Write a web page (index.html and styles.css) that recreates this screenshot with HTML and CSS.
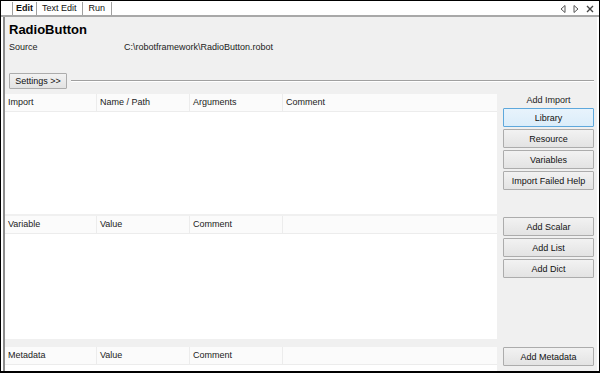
FILE: index.html
```html
<!DOCTYPE html>
<html lang="en">
<head>
    <meta charset="UTF-8">
    <title>RadioButton</title>
    <link rel="stylesheet" href="styles.css">
</head>
<body>
    <div class="frame">
        <div class="tabbar">
            <div class="tabs">
                <span class="tab active">Edit</span>
                <span class="tab">Text Edit</span>
                <span class="tab">Run</span>
            </div>
            <div class="tab-tools">
                <svg width="6" height="8" viewBox="0 0 6 8"><path d="M5 0.5 L1 4 L5 7.5 Z" fill="none" stroke="#555" stroke-width="1"/></svg>
                <svg width="6" height="8" viewBox="0 0 6 8"><path d="M1 0.5 L5 4 L1 7.5 Z" fill="none" stroke="#555" stroke-width="1"/></svg>
                <svg width="8" height="8" viewBox="0 0 8 8"><path d="M1 1 L7 7 M7 1 L1 7" stroke="#444" stroke-width="1.4"/></svg>
            </div>
        </div>

        <div class="panel">
            <h1 class="title">RadioButton</h1>
            <div class="source">
                <span class="source-label">Source</span>
                <span>C:\robotframework\RadioButton.robot</span>
            </div>

            <div class="settings-row">
                <button class="btn settings">Settings &gt;&gt;</button>
                <div class="rule"></div>
            </div>

            <div class="section imports">
                <div class="grid">
                    <div class="grid-head">
                        <span>Import</span>
                        <span>Name / Path</span>
                        <span>Arguments</span>
                        <span>Comment</span>
                    </div>
                </div>
                <div class="actions">
                    <div class="actions-label">Add Import</div>
                    <button class="btn focused">Library</button>
                    <button class="btn">Resource</button>
                    <button class="btn">Variables</button>
                    <button class="btn">Import Failed Help</button>
                </div>
            </div>

            <div class="section variables">
                <div class="grid">
                    <div class="grid-head">
                        <span>Variable</span>
                        <span>Value</span>
                        <span>Comment</span>
                        <span></span>
                    </div>
                </div>
                <div class="actions">
                    <button class="btn">Add Scalar</button>
                    <button class="btn">Add List</button>
                    <button class="btn">Add Dict</button>
                </div>
            </div>

            <div class="section metadata">
                <div class="grid">
                    <div class="grid-head">
                        <span>Metadata</span>
                        <span>Value</span>
                        <span>Comment</span>
                        <span></span>
                    </div>
                </div>
                <div class="actions">
                    <button class="btn">Add Metadata</button>
                </div>
            </div>
        </div>
    </div>
</body>
</html>
```

FILE: styles.css
```css
body {
    margin: 0;
    padding: 0;
    background-color: #fff;
    font-family: 'Liberation Sans', Arial, sans-serif;
    font-size: 9px;
    color: #222;
}

.frame {
    width: 600px;
    height: 373px;
    box-sizing: border-box;
    border: 1px solid #000;
    border-bottom-width: 2px;
    display: flex;
    flex-direction: column;
    overflow: hidden;
    background-color: #fff;
}

/* tab strip across the top */
.tabbar {
    height: 14px;
    display: flex;
    justify-content: space-between;
    align-items: flex-end;
    border-bottom: 2px solid #a8a8a8;
    flex-shrink: 0;
}

.tabs {
    display: flex;
    padding-left: 11px;
    height: 13px;
}

.tab {
    padding: 0 5px;
    line-height: 13px;
    border-right: 1px solid #a0a0a0;
    color: #111;
}

.tab:last-child {
    padding: 0 6px;
}

.tab.active {
    font-weight: bold;
    background-color: #fff;
    border-left: 1px solid #a0a0a0;
    padding: 0 3px;
}

.tab-tools {
    display: flex;
    gap: 7px;
    align-items: center;
    height: 13px;
    padding-right: 5px;
}

.tab-tools svg {
    display: block;
}

/* main editor panel */
.panel {
    flex: 1;
    margin-left: 2px;
    margin-right: 2px;
    border-left: 2px solid #8c8c8c;
    background-color: #f0f0f0;
    display: flex;
    flex-direction: column;
    min-height: 0;
}

.title {
    margin: 4px 0 0 4px;
    font-size: 13px;
    font-weight: bold;
    color: #000;
    line-height: 17px;
}

.source {
    display: flex;
    margin: 3px 0 0 4px;
    line-height: 12px;
}

.source-label {
    width: 115px;
}

.settings-row {
    display: flex;
    align-items: center;
    margin: 20px 0 0 4px;
    gap: 4px;
}

.rule {
    flex: 1;
    height: 0;
    border-top: 1px solid #a0a0a0;
    border-bottom: 1px solid #fff;
    margin-right: 3px;
}

.btn {
    font-family: inherit;
    font-size: 9px;
    color: #111;
    background: linear-gradient(#f2f2f2, #e3e3e3);
    border: 1px solid #acacac;
    border-radius: 1px;
    height: 19px;
    padding: 0;
    width: 91px;
    box-sizing: border-box;
}

.btn.settings {
    width: 58px;
    height: 16px;
}

.btn.focused {
    background: linear-gradient(#e8f3fc, #dbedfa);
    border-color: #5ea8dc;
}

.section {
    display: flex;
    gap: 6px;
}

.imports {
    margin-top: 5px;
    height: 122px;
}

.variables {
    height: 131px;
}

.metadata {
    flex: 1;
}

.grid {
    flex: 1;
    background-color: #fff;
    align-self: flex-start;
}

.imports .grid {
    height: 120px;
}

.variables .grid {
    height: 123px;
}

.metadata .grid {
    height: 100%;
}

.grid-head {
    display: grid;
    grid-template-columns: 92px 93px 93px 1fr;
    height: 17px;
    background-color: #fbfbfb;
    border-bottom: 1px solid #ececec;
}

.grid-head span {
    padding-left: 3px;
    line-height: 17px;
    border-right: 1px solid #ececec;
}

.grid-head span:last-child {
    border-right: none;
}

.actions {
    width: 91px;
    display: flex;
    flex-direction: column;
    gap: 2px;
    padding-top: 1px;
    margin-right: 3px;
}

.imports .actions {
    padding-top: 0;
}

.metadata .actions {
    padding-top: 0;
}

.actions-label {
    text-align: center;
    line-height: 12px;
    height: 12px;
}
```
